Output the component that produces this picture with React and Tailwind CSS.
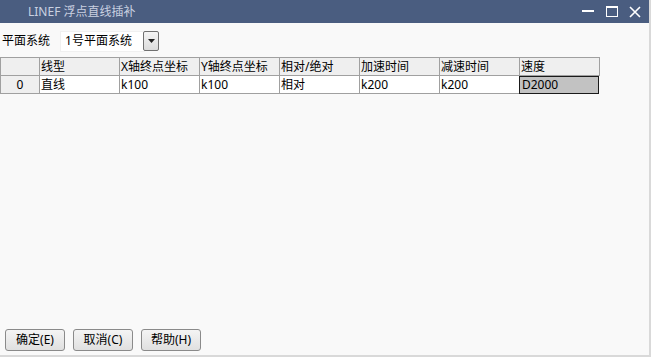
import React from "react";

const cols = ["线型", "X轴终点坐标", "Y轴终点坐标", "相对/绝对", "加速时间", "减速时间", "速度"];
const vals = ["直线", "k100", "k100", "相对", "k200", "k200", "D2000"];

export default function App() {
  return (
    <div
      className="w-[651px] h-[357px] flex flex-col bg-[#f9f9f9] border-r-2 border-b-2 border-[#d9d9d9] overflow-hidden"
      style={{ fontFamily: '"Noto Sans", "Noto Sans CJK SC", sans-serif' }}
    >
      <div className="h-[23px] bg-[#4a5d80] flex items-center shrink-0">
        <div className="pl-[28px] text-[12px] text-[#c9d1e0] leading-none">LINEF 浮点直线插补</div>
        <div className="ml-auto flex items-center h-full">
          <svg width="14" height="14" viewBox="0 0 14 14" className="mr-[10px]">
            <rect x="1" y="5" width="12" height="2" fill="#ffffff" />
          </svg>
          <svg width="14" height="14" viewBox="0 0 14 14" className="mr-[9px]">
            <rect x="1.5" y="1.5" width="11" height="10" fill="none" stroke="#ffffff" strokeWidth="1" />
            <rect x="1" y="1" width="12" height="2" fill="#ffffff" />
          </svg>
          <svg width="14" height="14" viewBox="0 0 14 14" className="mr-[7px]">
            <path d="M2 2 L12 12 M12 2 L2 12" stroke="#ffffff" strokeWidth="1.6" />
          </svg>
        </div>
      </div>

      <div className="flex items-center h-[34px] pt-[2px]">
        <span className="pl-[2px] text-[12px] text-black">平面系统</span>
        <div className="ml-[10px] w-[85px] h-[21px] bg-white border border-[#f0f0f0] flex items-center pl-[4px] text-[12px] text-black">
          1号平面系统
        </div>
        <div className="w-[16px] h-[20px] ml-[-2px] border border-[#707070] rounded-[2px] bg-gradient-to-b from-[#f4f4f4] to-[#dcdcdc] flex items-center justify-center">
          <svg width="7" height="4" viewBox="0 0 7 4">
            <path d="M0 0 L7 0 L3.5 4 Z" fill="#222" />
          </svg>
        </div>
      </div>

      <div className="w-[600px] text-[12px] text-black">
        <div className="flex h-[19px] border-t border-[#a0a0a0]">
          <div className="w-[40px] bg-[#efefef] border-l border-r border-b border-[#a0a0a0]" />
          {cols.map((c) => (
            <div key={c} className="w-[80px] bg-[#efefef] border-r border-b border-[#a0a0a0] pl-[1px] leading-[18px]">
              {c}
            </div>
          ))}
        </div>
        <div className="flex h-[18px]">
          <div className="w-[40px] bg-[#efefef] border-l border-r border-b border-[#a0a0a0] text-center leading-[17px]">0</div>
          {vals.map((v, i) =>
            i === 6 ? (
              <div key={i} className="w-[80px] bg-[#c2c2c2] border border-[#1a1a1a] ml-[-1px] pl-[2px] leading-[16px]">
                {v}
              </div>
            ) : (
              <div key={i} className="w-[80px] bg-white border-r border-b border-[#a0a0a0] pl-[1px] leading-[17px]">
                {v}
              </div>
            )
          )}
        </div>
      </div>

      <div className="mt-auto flex gap-[8px] pl-[5px] pb-[4px]">
        {["确定(E)", "取消(C)", "帮助(H)"].map((b) => (
          <div
            key={b}
            className="w-[60px] h-[22px] border border-[#8a8a8a] rounded-[3px] bg-gradient-to-b from-[#f4f4f4] to-[#e0e0e0] flex items-center justify-center text-[12px] text-black"
          >
            {b}
          </div>
        ))}
      </div>
    </div>
  );
}
